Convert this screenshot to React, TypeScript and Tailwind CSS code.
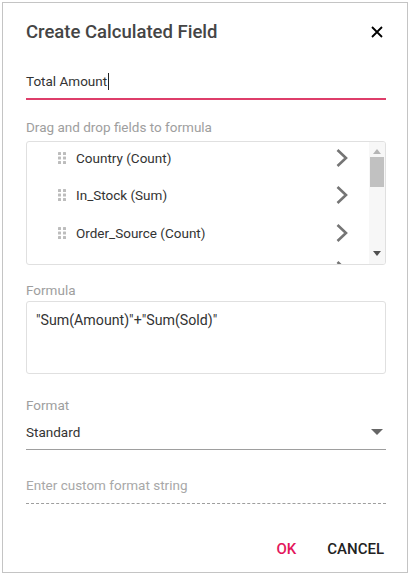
import React from "react";

const items = ["Country (Count)", "In_Stock (Sum)", "Order_Source (Count)"];

function DragDots() {
  return (
    <svg width="8" height="12" viewBox="0 0 8 12" className="shrink-0">
      {[0, 1, 2].map((r) =>
        [0, 1].map((c) => (
          <rect key={`${r}-${c}`} x={c * 5} y={r * 4.5} width="3" height="3" rx="0.5" fill="#bdbdbd" />
        ))
      )}
    </svg>
  );
}

function Chevron() {
  return (
    <svg width="14" height="20" viewBox="0 0 14 20">
      <path d="M2.5 2 L11 10 L2.5 18" fill="none" stroke="#757575" strokeWidth="2.6" />
    </svg>
  );
}

export default function App() {
  return (
    <div className="w-[411px] h-[576px] bg-white p-[2px]" style={{ fontFamily: "Roboto, 'Liberation Sans', sans-serif" }}>
      <div className="w-[406px] h-[571px] border border-[#c4c4c4] bg-white flex flex-col pl-[23px] pr-[21px] pt-[17px]">
        {/* Header */}
        <div className="flex items-center justify-between h-[24px]">
          <div className="text-[18.5px] leading-[24px] font-medium text-[#454545]">Create Calculated Field</div>
          <svg width="12" height="12" viewBox="0 0 12 12" className="mr-[3px]">
            <path d="M1 1 L11 11 M11 1 L1 11" stroke="#000" strokeWidth="1.8" />
          </svg>
        </div>

        {/* Name input */}
        <div className="mt-[27px] border-b-2 border-[#de3e6a] pb-[7px] flex items-center h-[29px]">
          <span className="text-[13.5px] leading-[20px] text-[#333]">Total Amount</span>
          <span className="w-px h-[17px] bg-[#222] ml-[1px]" />
        </div>

        {/* Fields label */}
        <div className="mt-[18px] text-[13.5px] leading-[18px] text-[#9e9e9e]">Drag and drop fields to formula</div>

        {/* List */}
        <div className="mt-[5px] h-[124px] border border-[#e0e0e0] rounded-[3px] flex overflow-hidden">
          <div className="flex-1 overflow-hidden">
            <div className="mt-[-3px]">
              {items.map((it) => (
                <div key={it} className="h-[37.5px] flex items-center pl-[31px] pr-[20px]">
                  <DragDots />
                  <span className="ml-[10px] text-[13.5px] text-[#333] flex-1">{it}</span>
                  <Chevron />
                </div>
              ))}
              <div className="h-[37.5px] flex items-center justify-end pr-[20px]">
                <Chevron />
              </div>
            </div>
          </div>
          <div className="w-[16px] bg-[#f7f7f7] flex flex-col items-center">
            <svg width="8" height="5" viewBox="0 0 8 5" className="mt-[7px]">
              <path d="M0 5 L4 0 L8 5 Z" fill="#b5b5b5" />
            </svg>
            <div className="mt-[3px] w-[14px] h-[30px] bg-[#c1c1c1]" />
            <div className="flex-1" />
            <svg width="8" height="5" viewBox="0 0 8 5" className="mb-[8px]">
              <path d="M0 0 L8 0 L4 5 Z" fill="#505050" />
            </svg>
          </div>
        </div>

        {/* Formula */}
        <div className="mt-[16px] text-[13.5px] leading-[18px] text-[#9e9e9e]">Formula</div>
        <div className="mt-[2px] h-[73px] border border-[#e0e0e0] rounded-[3px] pl-[9px] pt-[8px]">
          <div className="text-[14.2px] leading-[20px] text-[#333]">"Sum(Amount)"+"Sum(Sold)"</div>
        </div>

        {/* Format */}
        <div className="mt-[22px] text-[13.5px] leading-[18px] text-[#9e9e9e]">Format</div>
        <div className="mt-[8px] border-b border-[#9e9e9e] pb-[7px] flex items-center justify-between">
          <span className="text-[13.5px] leading-[20px] text-[#333]">Standard</span>
          <svg width="12" height="6" viewBox="0 0 12 6" className="mr-[3px]">
            <path d="M0 0 L12 0 L6 6 Z" fill="#666" />
          </svg>
        </div>

        {/* Custom format */}
        <div className="mt-[23px] border-b border-dashed border-[#9e9e9e] pb-[6px]">
          <span className="text-[13.5px] leading-[20px] text-[#a8a8a8]">Enter custom format string</span>
        </div>

        {/* Buttons */}
        <div className="mt-[35px] flex justify-end items-center gap-[31px] pr-[2px]">
          <span className="text-[15px] leading-[20px] font-medium text-[#e3165b]">OK</span>
          <span className="text-[15px] leading-[20px] font-medium text-[#222]">CANCEL</span>
        </div>
      </div>
    </div>
  );
}
